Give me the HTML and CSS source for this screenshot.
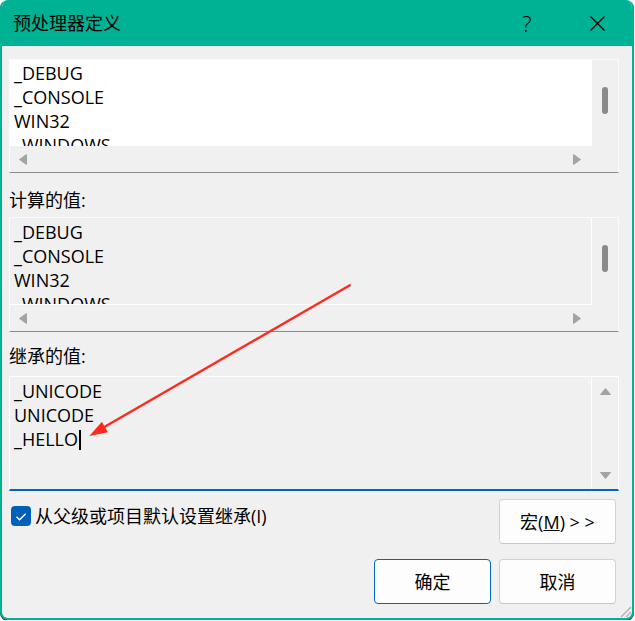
FILE: index.html
```html
<!DOCTYPE html>
<html>
  <head>
    <meta charset="utf-8">
    <title>预处理器定义</title>
    <link rel="stylesheet" href="styles.css">
  </head>
  <body>
    <div class="window">
      <div class="titlebar">
        <span class="title">预处理器定义</span>
        <span class="title-btn help">?</span>
        <span class="title-btn close">
          <svg width="15" height="15" viewBox="0 0 15 15">
            <path d="M0.5 0.5L14.5 14.5M14.5 0.5L0.5 14.5" stroke="#000" stroke-width="1.2" fill="none"/>
          </svg>
        </span>
      </div>

      <div class="content">
        <div class="listbox editable">
          <div class="lines">
            <div>_DEBUG</div>
            <div>_CONSOLE</div>
            <div>WIN32</div>
            <div>_WINDOWS</div>
          </div>
          <div class="vscroll"><div class="thumb"></div></div>
          <div class="hscroll">
            <svg width="8" height="11" viewBox="0 0 8 11"><path d="M7.5 0.5V10.5L0.5 5.5Z" class="arrow"/></svg>
            <svg width="8" height="11" viewBox="0 0 8 11"><path d="M0.5 0.5V10.5L7.5 5.5Z" class="arrow"/></svg>
          </div>
          <div></div>
        </div>

        <div class="field-label">计算的值:</div>
        <div class="listbox disabled">
          <div class="lines">
            <div>_DEBUG</div>
            <div>_CONSOLE</div>
            <div>WIN32</div>
            <div>_WINDOWS</div>
          </div>
          <div class="vscroll"><div class="thumb"></div></div>
          <div class="hscroll">
            <svg width="8" height="11" viewBox="0 0 8 11"><path d="M7.5 0.5V10.5L0.5 5.5Z" class="arrow"/></svg>
            <svg width="8" height="11" viewBox="0 0 8 11"><path d="M0.5 0.5V10.5L7.5 5.5Z" class="arrow"/></svg>
          </div>
          <div></div>
        </div>

        <div class="field-label second">继承的值:</div>
        <div class="listbox inherited">
          <div class="lines">
            <div>_UNICODE</div>
            <div>UNICODE</div>
            <div>_HELLO<span class="caret"></span></div>
          </div>
          <div class="vscroll arrows">
            <svg width="11" height="7" viewBox="0 0 11 7"><path d="M0.5 6.5H10.5L5.5 0.5Z" class="arrow"/></svg>
            <svg width="11" height="7" viewBox="0 0 11 7"><path d="M0.5 0.5H10.5L5.5 6.5Z" class="arrow"/></svg>
          </div>
        </div>

        <div class="options">
          <label class="check">
            <span class="check-box">
              <svg width="20" height="20" viewBox="0 0 20 20">
                <path d="M5.5 10.8L8.6 13.8L14.6 7.8" stroke="#fff" stroke-width="1.3" fill="none"/>
              </svg>
            </span>
            <span>从父级或项目默认设置继承(I)</span>
          </label>
          <button type="button" class="button">宏(<u>M</u>) &gt; &gt;</button>
        </div>

        <div class="actions">
          <button type="button" class="button default">确定</button>
          <button type="button" class="button">取消</button>
        </div>
      </div>

      <svg class="grip" width="14" height="14" viewBox="0 0 14 14">
        <path d="M13 3L3 13M13 8L8 13" stroke="#b4b4b4" stroke-width="1.5" fill="none"/>
      </svg>
    </div>

    <svg class="annotation" width="635" height="621" viewBox="0 0 635 621">
      <path d="M350.7 284.7L103 427.8" stroke="#ff2a1f" stroke-width="2.4" fill="none"/>
      <path d="M89.3 436L101.9 421.8L107.9 432.2Z" fill="#ff2a1f"/>
    </svg>
  </body>
</html>
```

FILE: styles.css
```css
:root {
  --color-accent: #00b294;
  --color-face: #f0f0f0;
  --color-focus: #0067c0;
  --color-check: #005fb8;
  --color-arrow: #a3a3a3;
  --color-thumb: #8a8a8a;
  --color-line: #8a8a8a;
  --color-btn-border: #d3d3d3;

  --line-height: 24px;
  --scroll-size: 26px;
  --radius: 4px;
}

html, body {
  margin: 0;
}

body {
  position: relative;
  background: #fff;
  color: #000;
  font-family: "Open Sans", "Noto Sans CJK SC", sans-serif;
  font-size: 18px;
  line-height: var(--line-height);
}

.window {
  position: relative;
  width: 634px;
  height: 620px;
  box-sizing: border-box;
  border: 2px solid var(--color-accent);
  border-top: 0;
  border-radius: 8px;
  background: var(--color-face);
  overflow: hidden;
  box-shadow: 0 1px 0 #333;
}

.titlebar {
  height: 46px;
  display: flex;
  align-items: center;
  gap: 30px;
  padding: 0 15px 0 11px;
  background: var(--color-accent);
}

.title {
  flex: 1;
}

.title-btn {
  width: 40px;
  text-align: center;
}

.help {
  font-size: 22px;
  font-weight: 300;
}

.close svg {
  display: block;
  margin: 0 auto;
}

.content {
  padding: 13px 13px 0 7px;
}

/* list boxes */

.listbox {
  display: grid;
  grid-template-columns: 1fr var(--scroll-size);
  grid-template-rows: 1fr var(--scroll-size);
  height: 115px;
  box-sizing: border-box;
  border: 1px solid #fbfbfb;
  border-bottom-color: var(--color-line);
}

.lines {
  overflow: hidden;
  padding: 2px 0 0 4px;
  white-space: nowrap;
}

.editable {
  height: 114px;
}

.editable .lines {
  padding-top: 1px;
  background: #fff;
}

.disabled .lines {
  border-right: 1px solid #fff;
  border-bottom: 1px solid #fff;
}

.inherited {
  grid-template-rows: 1fr;
  border-color: #fff;
  border-bottom: 2px solid var(--color-focus);
}

.inherited .lines {
  border-right: 1px solid #fff;
}

.vscroll {
  display: flex;
  justify-content: center;
  padding-top: 27px;
}

.vscroll.arrows {
  flex-direction: column;
  align-items: center;
  justify-content: space-between;
  padding: 11px 0 10px;
}

.thumb {
  width: 6px;
  height: 27px;
  border-radius: 3px;
  background: var(--color-thumb);
}

.hscroll {
  display: flex;
  align-items: center;
  justify-content: space-between;
  padding: 0 11px 0 9px;
}

.arrow {
  fill: var(--color-arrow);
  stroke: var(--color-arrow);
  stroke-linejoin: round;
}

svg {
  display: block;
}

.caret {
  display: inline-block;
  width: 2px;
  height: 20px;
  margin-left: 1px;
  vertical-align: -4px;
  background: #000;
}

.field-label {
  margin: 15px 0 5px;
}

.field-label.second {
  margin: 12px 0 8px;
}

/* bottom rows */

.options {
  display: flex;
  justify-content: space-between;
  align-items: flex-start;
  margin: 8px 3px 0 0;
}

.check {
  display: flex;
  align-items: center;
  gap: 4px;
  margin: 5px 0 0 2px;
}

.check-box {
  width: 20px;
  height: 20px;
  border-radius: var(--radius);
  background: var(--color-check);
}

.button {
  width: 117px;
  height: 45px;
  box-sizing: border-box;
  padding: 0;
  border: 1px solid var(--color-btn-border);
  border-bottom-color: #c6c6c6;
  border-radius: var(--radius);
  background: #fdfdfd;
  color: #000;
  font: inherit;
}

.button.default {
  border-color: var(--color-focus);
}

.actions {
  display: flex;
  justify-content: flex-end;
  gap: 8px;
  margin: 15px 3px 0 0;
}

.grip {
  position: absolute;
  right: 0;
  bottom: 0;
}

.annotation {
  position: absolute;
  top: 0;
  left: 0;
  pointer-events: none;
}
```
